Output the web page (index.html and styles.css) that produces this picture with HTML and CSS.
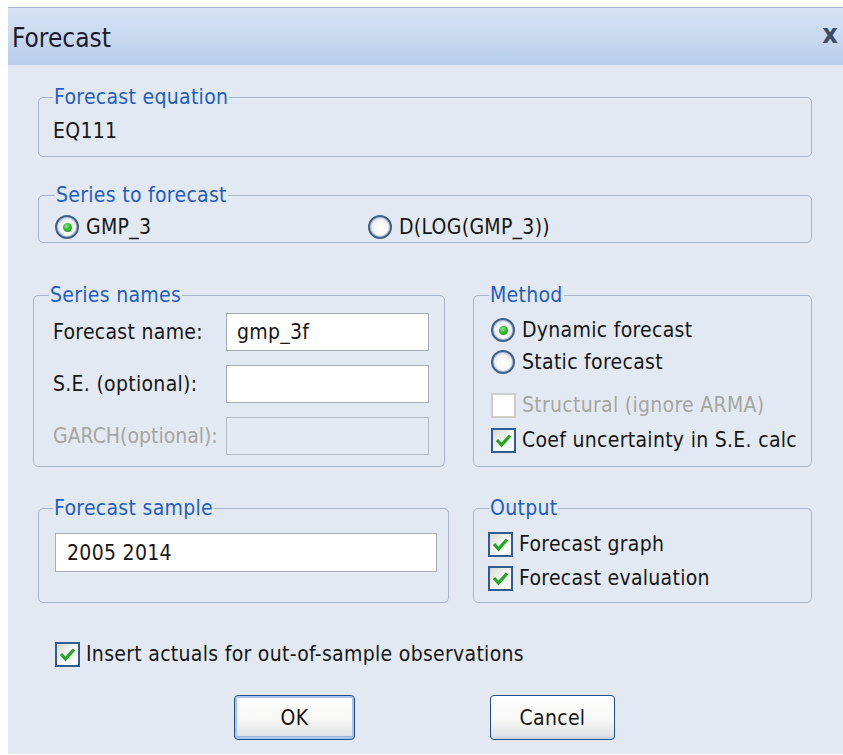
FILE: index.html
```html
<!DOCTYPE html>
<html lang="en">
<head>
<meta charset="utf-8">
<title>Forecast</title>
<link rel="stylesheet" href="styles.css">
</head>
<body>
<div class="window">
  <div class="titlebar">
    <span class="title">Forecast</span>
    <span class="close">x</span>
  </div>
  <div class="client">
    <fieldset class="group eq">
      <legend>Forecast equation</legend>
      <div class="eq-name">EQ111</div>
    </fieldset>

    <fieldset class="group series">
      <legend>Series to forecast</legend>
      <div class="radio-row">
        <label class="opt first"><span class="radio on"></span>GMP_3</label>
        <label class="opt"><span class="radio"></span>D(LOG(GMP_3))</label>
      </div>
    </fieldset>

    <div class="row row-names">
      <fieldset class="group names">
        <legend>Series names</legend>
        <div class="name-grid">
          <span class="field-label">Forecast name:</span>
          <input class="text-input" type="text" value="gmp_3f">
          <span class="field-label">S.E. (optional):</span>
          <input class="text-input" type="text" value="">
          <span class="field-label disabled">GARCH(optional):</span>
          <input class="text-input" type="text" value="" disabled>
        </div>
      </fieldset>

      <fieldset class="group method">
        <legend>Method</legend>
        <label class="opt"><span class="radio on"></span>Dynamic forecast</label>
        <label class="opt"><span class="radio"></span>Static forecast</label>
        <label class="opt disabled structural"><span class="check off"></span>Structural (ignore ARMA)</label>
        <label class="opt coef"><span class="check"><svg viewBox="0 0 21 21"><polyline points="4,10 8.5,15 17,5.5"/></svg></span>Coef uncertainty in S.E. calc</label>
      </fieldset>
    </div>

    <div class="row row-sample">
      <fieldset class="group sample">
        <legend>Forecast sample</legend>
        <input class="text-input wide" type="text" value="2005 2014">
      </fieldset>

      <fieldset class="group output">
        <legend>Output</legend>
        <label class="opt"><span class="check"><svg viewBox="0 0 21 21"><polyline points="4,10 8.5,15 17,5.5"/></svg></span>Forecast graph</label>
        <label class="opt eval"><span class="check"><svg viewBox="0 0 21 21"><polyline points="4,10 8.5,15 17,5.5"/></svg></span>Forecast evaluation</label>
      </fieldset>
    </div>

    <label class="opt insert"><span class="check"><svg viewBox="0 0 21 21"><polyline points="4,10 8.5,15 17,5.5"/></svg></span>Insert actuals for out-of-sample observations</label>

    <div class="buttons">
      <button class="btn ok" type="button">OK</button>
      <button class="btn cancel" type="button">Cancel</button>
    </div>
  </div>
</div>
</body>
</html>
```

FILE: styles.css
```css
html, body {
  margin: 0;
  background: #ffffff;
}

body {
  font-family: "DejaVu Sans Condensed", "DejaVu Sans", sans-serif;
  font-stretch: condensed;
  font-size: 21px;
  line-height: 24px;
  letter-spacing: 0.3px;
  color: #161616;
  overflow: hidden;
}

.window {
  margin: 7px 0 0 8px;
  width: 835px;
}

/* caption bar */
.titlebar {
  box-sizing: border-box;
  height: 58px;
  border-top: 1px solid #a2b5d0;
  background: linear-gradient(#d7e3f4, #c7d8ef 55%, #b6cce9);
  display: flex;
  justify-content: space-between;
  align-items: flex-start;
  padding: 16px 5px 0 4px;
}

.title {
  font-size: 26px;
  line-height: 28px;
  letter-spacing: 0;
  color: #1d1a2e;
}

.close {
  font-family: "DejaVu Sans", sans-serif;
  font-weight: bold;
  font-size: 27px;
  line-height: 27px;
  letter-spacing: 0;
  margin-top: -4px;
  color: #3d4c69;
}

/* dialog body */
.client {
  box-sizing: border-box;
  height: 689px;
  background: #e3e9f2;
  padding: 20px 31px 0 30px;
}

.group {
  margin: 0;
  min-width: 0;
  border: 1px solid #a8b6cb;
  border-radius: 5px;
  padding: 0 14px;
}

.group legend {
  padding: 0 1px;
  line-height: 24px;
  color: #1f5ec4;
}

.eq {
  padding: 10px 14px 13px 14px;
}

.series {
  margin-top: 26px;
  padding: 8px 14px 3px 16px;
}

.radio-row {
  display: flex;
  height: 24px;
}

/* radio / checkbox rows */
.opt {
  display: flex;
  align-items: center;
  height: 32px;
  white-space: nowrap;
}

.radio-row .opt {
  height: 24px;
}

.radio-row .first {
  width: 313px;
}

.radio {
  position: relative;
  flex: none;
  box-sizing: border-box;
  width: 24px;
  height: 24px;
  margin-right: 7px;
  border-radius: 50%;
  border: 2px solid #40618a;
  background: radial-gradient(circle at 55% 55%, #ffffff 0, #f7f7f5 40%, #dde2e8 75%, #b9c6d6 100%);
  box-shadow: inset 0 0 0 1px #b4c6dc;
}

.radio.on::after {
  content: "";
  position: absolute;
  left: 50%;
  top: 50%;
  width: 9px;
  height: 9px;
  margin: -4.5px 0 0 -4.5px;
  border-radius: 50%;
  background: radial-gradient(circle at 40% 35%, #8ee88e 0, #2dbb2d 45%, #178a17 100%);
}

.check {
  flex: none;
  box-sizing: border-box;
  width: 25px;
  height: 25px;
  margin-right: 6px;
  border: 2px solid #2f5d8d;
  background: linear-gradient(135deg, #d9d9d3 0, #f2f2ef 45%, #ffffff 80%);
}

.check svg {
  display: block;
  width: 21px;
  height: 21px;
  fill: none;
  stroke: #21a821;
  stroke-width: 3.2;
}

.check.off {
  border-color: #cfcfca;
  background: #ffffff;
}

.disabled {
  color: #a6a6a2;
}

/* two-column rows */
.row {
  display: grid;
  grid-template-columns: 411px 339px;
  column-gap: 24px;
}

.row-names {
  margin-top: 40px;
}

.names {
  margin: 0 4px 0 -5px;
  padding: 6px 15px 11px 15px;
}

.name-grid {
  display: grid;
  grid-template-columns: 1fr 203px;
  row-gap: 14px;
  align-items: center;
}

.field-label {
  padding-left: 4px;
  white-space: nowrap;
}

.field-label.disabled {
  letter-spacing: 0;
}

.text-input {
  box-sizing: border-box;
  height: 38px;
  width: 100%;
  margin: 0;
  border: 1px solid #a6adb8;
  background: #ffffff;
  padding: 0 0 0 10px;
  font: inherit;
  letter-spacing: inherit;
  color: #161616;
  outline: none;
}

.text-input:disabled {
  background: #e4e9f1;
  border-color: #b7bbc2;
}

.method {
  padding: 7px 14px 10px 15px;
}

.method .opt {
  margin-left: 2px;
}

.method .structural {
  margin-top: 11px;
}

.method .coef {
  margin-top: 3px;
}

.row-sample {
  margin-top: 29px;
}

.sample {
  padding: 13px 11px 30px 16px;
}

.sample legend {
  margin-left: -2px;
}

.text-input.wide {
  height: 39px;
  padding-left: 11px;
}

.output {
  padding: 8px 14px 8px 15px;
}

.output .opt {
  margin-left: -1px;
}

.output .eval {
  margin-top: 2px;
}

.insert {
  margin: 35px 0 0 17px;
}

/* push buttons */
.buttons {
  display: flex;
  margin-top: 25px;
}

.btn {
  box-sizing: border-box;
  height: 45px;
  margin: 0;
  padding: 0;
  font: inherit;
  letter-spacing: inherit;
  color: #161616;
  border: 1px solid #1f4f86;
  border-radius: 4px;
  background: linear-gradient(#ffffff, #f7f7f6 55%, #e3e4e7 90%, #d5d8de);
  box-shadow: inset 0 -2px 0 #d0d6e0;
}

.btn.ok {
  width: 121px;
  margin-left: 196px;
  box-shadow: inset 0 0 0 2px #a9c5ee, inset 0 -3px 0 #98b6e2;
}

.btn.cancel {
  width: 125px;
  margin-left: 135px;
}
```
